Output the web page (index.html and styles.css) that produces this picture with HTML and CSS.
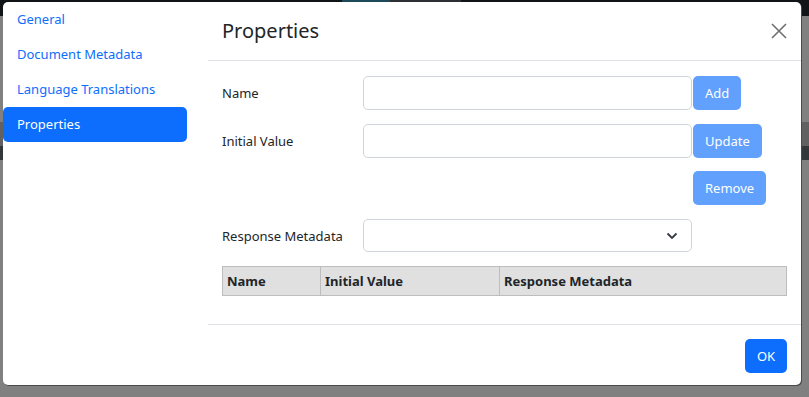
FILE: index.html
```html
<!DOCTYPE html>
<html lang="en">
<head>
    <meta charset="UTF-8">
    <title>Properties</title>
    <link rel="stylesheet" href="styles.css">
</head>
<body>
    <div class="page">
        <div class="topbar">
            <span class="seg seg-a"></span>
            <span class="seg seg-b"></span>
        </div>
        <div class="page-gap"></div>
        <div class="band band-a"></div>
        <div class="band band-b"></div>
    </div>

    <div class="modal">
        <ul class="nav-pills">
            <li><a class="nav-link">General</a></li>
            <li><a class="nav-link">Document Metadata</a></li>
            <li><a class="nav-link">Language Translations</a></li>
            <li><a class="nav-link active">Properties</a></li>
        </ul>

        <div class="modal-content">
            <div class="modal-header">
                <h4 class="modal-title">Properties</h4>
                <button class="btn-close" aria-label="Close">
                    <svg width="16" height="16" viewBox="0 0 16 16">
                        <path d="M1 1 L15 15 M15 1 L1 15" stroke="#6f6f6f" stroke-width="1.6" fill="none"/>
                    </svg>
                </button>
            </div>

            <div class="modal-body">
                <div class="form-row">
                    <label class="form-label">Name</label>
                    <input class="form-control" type="text">
                    <button class="btn btn-primary" disabled>Add</button>
                </div>
                <div class="form-row">
                    <label class="form-label">Initial Value</label>
                    <input class="form-control" type="text">
                    <button class="btn btn-primary" disabled>Update</button>
                </div>
                <div class="form-row">
                    <span class="form-label"></span>
                    <span class="spacer"></span>
                    <button class="btn btn-primary" disabled>Remove</button>
                </div>
                <div class="form-row select-row">
                    <label class="form-label">Response Metadata</label>
                    <div class="form-select">
                        <svg width="12" height="8" viewBox="0 0 12 8">
                            <path d="M1.5 1.5 L6 6 L10.5 1.5" stroke="#343a40" stroke-width="1.8" fill="none"/>
                        </svg>
                    </div>
                </div>

                <table class="props-table">
                    <thead>
                        <tr>
                            <th class="col-name">Name</th>
                            <th class="col-value">Initial Value</th>
                            <th>Response Metadata</th>
                        </tr>
                    </thead>
                </table>
            </div>

            <div class="modal-footer">
                <button class="btn btn-primary ok">OK</button>
            </div>
        </div>
    </div>
</body>
</html>
```

FILE: styles.css
```css
html {
    font-size: 13px;
}
body {
    margin: 0;
    font-family: 'Noto Sans', 'Open Sans', sans-serif;
    color: #212529;
    background-color: #808080;
    height: 397px;
    overflow: hidden;
}

/* page behind the backdrop */
.topbar {
    height: 16px;
    background-color: #121518;
    display: flex;
}
.seg {
    height: 100%;
}
.seg-a {
    margin-left: 342px;
    width: 48px;
    background-color: #1d4a5b;
}
.seg-b {
    width: 71px;
    background-color: #2c2f33;
}
.page-gap {
    height: 106px;
}
.band-a {
    height: 24px;
    background-color: #616161;
}
.band-b {
    height: 14px;
    background-color: #33373a;
}

/* dialog */
.modal {
    position: absolute;
    left: 3px;
    top: 2px;
    width: 798px;
    height: 383px;
    background-color: #fff;
    border-radius: 5px;
    box-shadow: 1px 1px 0 #4a4a4a;
    display: flex;
    overflow: hidden;
}
.nav-pills {
    list-style: none;
    margin: 0;
    padding: 0;
    width: 184px;
    flex-shrink: 0;
}
.nav-link {
    display: block;
    padding: 7px 14px;
    line-height: 21px;
    color: #0d6efd;
    border-radius: 5px;
}
.nav-link.active {
    background-color: #0d6efd;
    color: #fff;
}

.modal-content {
    flex: 1;
    margin-left: 21px;
    display: flex;
    flex-direction: column;
}
.modal-header {
    height: 58px;
    padding: 0 14px;
    border-bottom: 1px solid #dee2e6;
    display: flex;
    align-items: center;
    justify-content: space-between;
}
.modal-title {
    margin: 0;
    font-size: 20px;
    font-weight: 400;
    line-height: 30px;
}
.btn-close {
    border: none;
    background: none;
    padding: 0;
    width: 16px;
    height: 16px;
    display: flex;
}

.modal-body {
    padding: 15px 14px 14px;
}
.form-row {
    display: flex;
    align-items: center;
    height: 34px;
    margin-bottom: 14px;
}
.form-row:nth-child(2) {
    margin-bottom: 13px;
}
.form-label {
    width: 141px;
    flex-shrink: 0;
}
.form-control, .spacer {
    width: 329px;
    height: 34px;
    box-sizing: border-box;
    margin: 0;
    border: 1px solid #ced4da;
    border-radius: 5px;
    font: inherit;
}
.spacer {
    border: none;
}
.btn {
    height: 34px;
    padding: 0 12px;
    margin-left: 1px;
    font: inherit;
    border: none;
    border-radius: 5px;
    color: #fff;
}
.btn-primary {
    background-color: #0d6efd;
}
.btn-primary:disabled {
    opacity: 0.65;
}
.select-row {
    height: 33px;
}
.form-select {
    width: 329px;
    height: 33px;
    box-sizing: border-box;
    border: 1px solid #ced4da;
    border-radius: 5px;
    display: flex;
    align-items: center;
    justify-content: flex-end;
    padding-right: 13px;
}

.props-table {
    width: 100%;
    border-collapse: collapse;
    margin-bottom: 14px;
}
.props-table th {
    background-color: #e0e0e0;
    border: 1px solid #bdbdbd;
    text-align: left;
    font-weight: 700;
    height: 28px;
    padding: 0 4px;
}
.col-name {
    width: 89px;
}
.col-value {
    width: 170px;
}

.modal-footer {
    border-top: 1px solid #dee2e6;
    padding: 14px 14px 0;
    display: flex;
    justify-content: flex-end;
}
.ok {
    width: 42px;
    padding: 0;
}
```
